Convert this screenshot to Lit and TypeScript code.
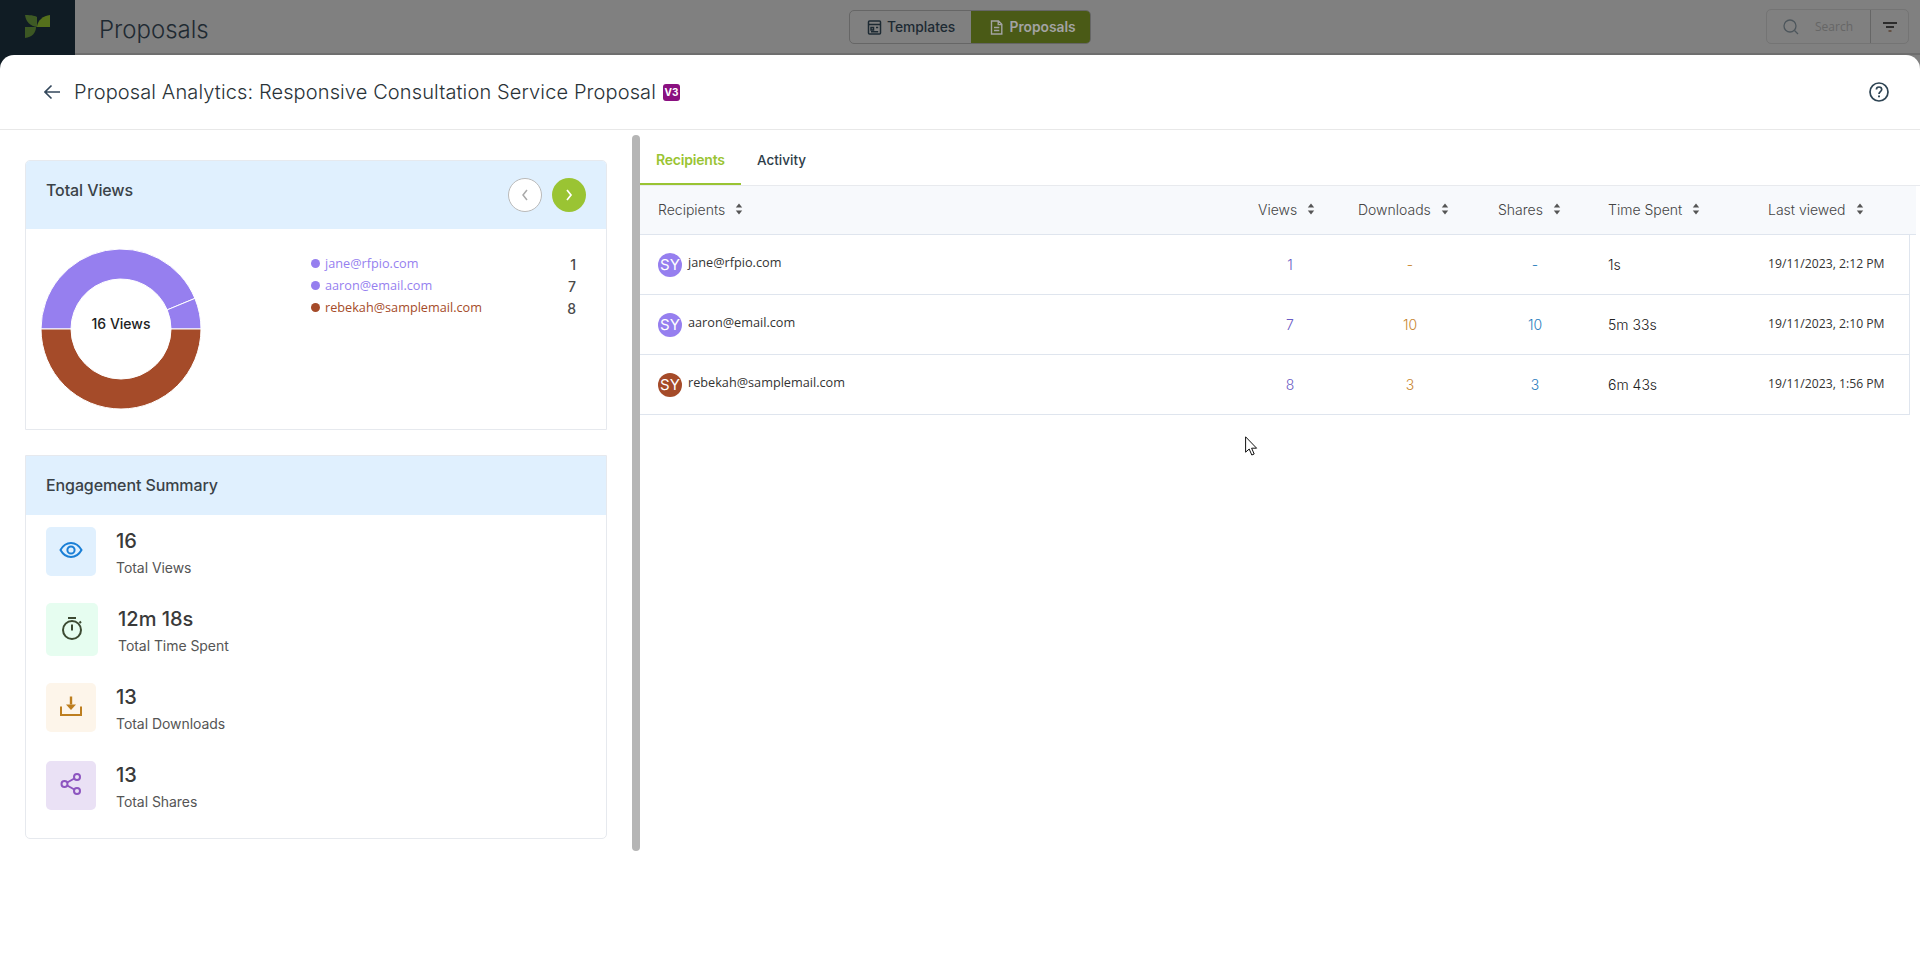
import { LitElement, html, css, svg } from 'lit';
import { customElement } from 'lit/decorators.js';

const PURPLE = '#967fef';
const BROWN = '#a54b29';

const recipients = [
  { mail: 'jane@rfpio.com', color: PURPLE, views: '1', downloads: '-', shares: '-', time: '1s', last: '19/11/2023, 2:12 PM' },
  { mail: 'aaron@email.com', color: PURPLE, views: '7', downloads: '10', shares: '10', time: '5m 33s', last: '19/11/2023, 2:10 PM' },
  { mail: 'rebekah@samplemail.com', color: BROWN, views: '8', downloads: '3', shares: '3', time: '6m 43s', last: '19/11/2023, 1:56 PM' },
];

// ring slice between two angles, degrees counted clockwise from 3 o'clock
function slice(from: number, to: number, color: string) {
  const pt = (r: number, a: number) => {
    const t = (a * Math.PI) / 180;
    return `${(80 + r * Math.cos(t)).toFixed(2)} ${(80 + r * Math.sin(t)).toFixed(2)}`;
  };
  const big = to - from > 180 ? 1 : 0;
  const d = `M${pt(80, from)} A80 80 0 ${big} 1 ${pt(80, to)} L${pt(50, to)} A50 50 0 ${big} 0 ${pt(50, from)} Z`;
  return svg`<path d=${d} fill=${color} stroke="#fff" stroke-width="1"></path>`;
}

const sortIcon = html`<svg class="sort" viewBox="0 0 8 12"><path d="M4 0.5 7.2 4.6H0.8Z M4 11.5 0.8 7.4H7.2Z" fill="#555"></path></svg>`;

@customElement('app-root')
export class AppRoot extends LitElement {
  static styles = css`
    * {
      box-sizing: border-box;
    }
    :host {
      display: block;
      position: relative;
      width: 1920px;
      height: 954px;
      overflow: hidden;
      background: #fff;
      font-family: Inter, 'Noto Sans', sans-serif;
      color: #333;
    }
    .topbar {
      display: flex;
      align-items: flex-start;
      height: 69px;
      background: #808080;
    }
    .brand {
      display: flex;
      justify-content: center;
      padding-top: 15px;
      width: 75px;
      height: 69px;
      background: #101c24;
    }
    .brand svg {
      width: 25px;
      height: 23px;
    }
    .page-title {
      width: 774px;
      height: 55px;
      padding: 13px 0 0 24px;
      font-size: 24px;
      line-height: 34px;
      font-weight: 300;
      color: #1f2a32;
      border-bottom: 2px solid #6e6e6e;
    }
    .fill {
      flex: 1;
      height: 55px;
      border-bottom: 2px solid #6e6e6e;
    }
    .center {
      width: 242px;
      height: 55px;
      padding-top: 10px;
      border-bottom: 2px solid #6e6e6e;
    }
    .toggle {
      display: flex;
      height: 34px;
      border: 1px solid #666;
      border-radius: 5px;
      overflow: hidden;
      font-size: 13.8px;
      font-weight: 500;
    }
    .toggle div {
      display: flex;
      align-items: center;
      gap: 5px;
      width: 121px;
      padding-left: 17px;
      color: #1d2a33;
    }
    .toggle svg {
      width: 15px;
      height: 15px;
      flex: none;
    }
    .toggle .on {
      width: 120px;
      padding-left: 18px;
      gap: 6px;
      background: #4a5a16;
      color: #a3a3a3;
      font-weight: 600;
    }
    .tools {
      width: 154px;
      height: 55px;
      padding: 9px 11px 0 0;
      border-bottom: 2px solid #6e6e6e;
    }
    .search {
      display: flex;
      height: 35px;
      border: 1px solid #747474;
      border-radius: 5px;
      font-family: 'Open Sans', sans-serif;
      font-size: 12px;
      color: #666;
    }
    .search .box {
      display: flex;
      align-items: center;
      gap: 16px;
      width: 104px;
      padding-left: 16px;
      border-right: 1px solid #666;
    }
    .search .filter {
      flex: 1;
      display: flex;
      align-items: center;
      justify-content: center;
    }
    .panel {
      position: relative;
      margin-top: -14px;
      background: #fff;
      border-radius: 14px 14px 0 0;
    }
    .panel-head {
      display: flex;
      align-items: center;
      height: 75px;
      padding: 0 31px 0 44px;
      border-bottom: 1px solid #e8e8e8;
    }
    .panel-head h1 {
      margin: 0 7px 0 14px;
      font-size: 20px;
      line-height: 28px;
      font-weight: 300;
      letter-spacing: 0.12px;
      color: #2a3338;
    }
    .badge {
      width: 17px;
      height: 17px;
      border-radius: 3px;
      background: #8a1080;
      color: #fff;
      font-size: 10px;
      font-weight: 700;
      line-height: 17px;
      text-align: center;
    }
    .help {
      margin-left: auto;
      width: 20px;
      height: 20px;
    }
    .body {
      display: flex;
      align-items: flex-start;
    }
    .left {
      width: 632px;
      padding: 30px 25px 0;
      display: flex;
      flex-direction: column;
      gap: 25px;
    }
    .scroll {
      width: 8px;
      height: 716px;
      margin-top: 5px;
      background: #b5b5b5;
      border-radius: 4px;
    }
    .card {
      border: 1px solid #e6e9ee;
      overflow: hidden;
    }
    .card-head {
      display: flex;
      align-items: center;
      padding: 0 20px;
      background: #e0f0fe;
      font-size: 16px;
      font-weight: 500;
      letter-spacing: -0.1px;
      color: #3a4248;
    }
    .views-card {
      height: 270px;
      border-radius: 5px 5px 0 0;
    }
    .views-card .card-head {
      height: 68px;
    }
    .views-card .card-head span {
      margin-bottom: 11px;
    }
    .nav {
      display: flex;
      gap: 10px;
      margin-left: auto;
    }
    .nav div {
      display: flex;
      align-items: center;
      justify-content: center;
      width: 34px;
      height: 34px;
      border-radius: 50%;
    }
    .nav .prev {
      background: #fff;
      border: 1px solid #b9b9b9;
    }
    .nav .next {
      background: #9ac433;
    }
    .nav svg {
      width: 10px;
      height: 12px;
    }
    .views-body {
      display: flex;
      align-items: flex-start;
      padding: 20px 0 0 15px;
    }
    .donut {
      position: relative;
      width: 160px;
      height: 160px;
    }
    .donut svg {
      display: block;
      width: 160px;
      height: 160px;
    }
    .donut span {
      position: absolute;
      left: 0;
      right: 0;
      top: 65px;
      line-height: 20px;
      text-align: center;
      font-size: 14px;
      font-weight: 500;
      color: #222;
    }
    .legend {
      width: 265px;
      margin: 3px 0 0 110px;
    }
    .legend-row {
      display: flex;
      align-items: center;
      height: 22px;
      font-family: 'Open Sans', sans-serif;
      font-size: 12.7px;
    }
    .legend-row i {
      width: 9px;
      height: 9px;
      margin-right: 5px;
      border-radius: 50%;
    }
    .legend-row b {
      margin: 3px 0 0 auto;
      font-family: Inter, sans-serif;
      font-size: 14px;
      font-weight: 500;
      color: #4a4a4a;
    }
    .eng {
      border-radius: 0 0 5px 5px;
    }
    .eng .card-head {
      height: 59px;
    }
    .eng .card-head span {
      margin-bottom: 2px;
    }
    .stats {
      display: flex;
      flex-direction: column;
      gap: 27px;
      height: 323px;
      padding: 12px 0 0 20px;
    }
    .stat {
      display: flex;
      align-items: flex-start;
      gap: 20px;
    }
    .stat:nth-child(3) {
      margin-bottom: 2px;
    }
    .tile {
      display: flex;
      align-items: center;
      justify-content: center;
      flex: none;
      width: 50px;
      height: 49px;
      border-radius: 5px;
    }
    .tile svg {
      width: 24px;
      height: 24px;
      margin-bottom: 4px;
    }
    .tile.big {
      width: 52px;
      height: 53px;
    }
    .stat-text {
      margin-bottom: -8px;
    }
    .tile.big + .stat-text {
      margin-top: 2px;
    }
    .num {
      font-size: 20px;
      line-height: 28px;
      font-weight: 500;
      color: #3a3a3a;
    }
    .lbl {
      font-size: 14px;
      line-height: 26px;
      font-weight: 400;
      letter-spacing: -0.05px;
      color: #555;
    }
    .right {
      flex: 1;
    }
    .tabs {
      display: flex;
      height: 56px;
      border-bottom: 1px solid #e8eaee;
      font-size: 13.5px;
      font-weight: 500;
      color: #2e3d49;
    }
    .tabs div {
      display: flex;
      align-items: center;
      padding: 5px 16px 0;
      height: 55px;
    }
    .tabs .on {
      width: 101px;
      padding-top: 5px;
      font-size: 14px;
      letter-spacing: -0.2px;
      color: #9ac433;
      font-weight: 600;
      border-bottom: 2px solid #9ac433;
    }
    .grid {
      display: grid;
      grid-template-columns: 600px 100px 140px 110px 160px 160px;
      align-items: center;
    }
    .thead {
      height: 49px;
      width: 1276px;
      padding-bottom: 2px;
      background: #f7f9fc;
      border-bottom: 1px solid #dfe5ee;
      font-size: 14px;
      font-weight: 300;
      color: #444;
    }
    .thead div {
      display: flex;
      align-items: center;
      gap: 10px;
      padding-left: 18px;
    }
    .sort {
      width: 8px;
      height: 12px;
    }
    .row {
      height: 60px;
      width: 1270px;
      border-bottom: 1px solid #dfe5ee;
      border-right: 1px solid #dfe5ee;
      font-size: 14px;
      font-weight: 300;
    }
    .who {
      display: flex;
      align-items: center;
      gap: 6px;
      padding-left: 18px;
      font-family: 'Open Sans', sans-serif;
      font-size: 12.7px;
      font-weight: 400;
      color: #333;
    }
    .who span {
      margin-bottom: 5px;
    }
    .avatar {
      display: flex;
      align-items: center;
      justify-content: center;
      width: 24px;
      height: 24px;
      border-radius: 50%;
      color: #fff;
      font-family: Inter, sans-serif;
      font-size: 15px;
      font-weight: 400;
    }
    .mid {
      text-align: center;
    }
    .c-views {
      color: #6a5bc4;
    }
    .c-down {
      color: #c8862f;
    }
    .c-share {
      color: #2a7dbd;
    }
    .time {
      padding-left: 18px;
      color: #222;
    }
    .last {
      padding-left: 18px;
      margin-bottom: 2px;
      font-family: 'Open Sans', sans-serif;
      font-size: 12.2px;
      font-weight: 400;
      color: #333;
    }
    .cursor {
      position: absolute;
      left: 1245px;
      top: 436px;
      width: 13px;
      height: 20px;
    }
  `;

  render() {
    return html`
      <div class="topbar">
        <div class="brand">
          <svg viewBox="0 0 25 23">
            <path d="M0 0C7 0 11 1 12 2V12C5 11 1 7 0 0Z" fill="#3e5a24"></path>
            <path d="M12 11.500C13 5 18 1 25 0V12H12Z" fill="#55701c"></path>
            <path d="M0 12H11C11 18 7 22 0 23Z" fill="#3c5723"></path>
          </svg>
        </div>
        <div class="page-title">Proposals</div>
        <div class="center">
          <div class="toggle">
            <div>
              <svg viewBox="0 0 15 15" fill="none" stroke="#1d2a33" stroke-width="1.5">
                <rect x="1.5" y="1" width="12" height="13" rx="1"></rect>
                <path d="M1.5 4.500H13.500M4 7.500H6.500V10H4ZM9 7.500H11.200M4 11.800H11.200"></path>
              </svg>
              Templates
            </div>
            <div class="on">
              <svg viewBox="0 0 15 15" fill="none" stroke="#a3a3a3" stroke-width="1.4">
                <path d="M2.500 1H9.500L12.800 4.300V14H2.500Z M9.200 1V4.600H12.800 M5 7.500H10.300M5 10.500H10.300"></path>
              </svg>
              Proposals
            </div>
          </div>
        </div>
        <div class="fill"></div>
        <div class="tools">
          <div class="search">
            <div class="box">
              <svg width="16" height="16" viewBox="0 0 16 16" fill="none" stroke="#4d565c" stroke-width="1.3">
                <circle cx="7" cy="7" r="6"></circle>
                <path d="M11.500 11.500 15 15"></path>
              </svg>
              Search
            </div>
            <div class="filter">
              <svg width="14" height="10" viewBox="0 0 14 10" fill="none" stroke="#111" stroke-width="1.5">
                <path d="M0 1H14M3 5H11"></path>
                <path d="M5.500 9H8.500" stroke="#5a4030"></path>
              </svg>
            </div>
          </div>
        </div>
      </div>
      <div class="panel">
        <div class="panel-head">
          <svg width="16" height="16" viewBox="0 0 16 16" fill="none" stroke="#33475b" stroke-width="1.6">
            <path d="M16 8H1M7.500 1.500 1 8l6.500 6.500"></path>
          </svg>
          <h1>Proposal Analytics: Responsive Consultation Service Proposal</h1>
          <div class="badge">V3</div>
          <svg class="help" viewBox="0 0 20 20" fill="none" stroke="#2e4453" stroke-width="1.7">
            <circle cx="10" cy="10" r="9"></circle>
            <path d="M7.400 7.600C7.400 6 8.600 5 10 5s2.700 1 2.700 2.500c0 2-2.700 2.200-2.700 4.400"></path>
            <path d="M10 13.600v1.700" stroke-width="1.900"></path>
          </svg>
        </div>
        <div class="body">
          <div class="left">
            <div class="card views-card">
              <div class="card-head">
                <span>Total Views</span>
                <div class="nav">
                  <div class="prev">
                    <svg viewBox="0 0 10 12" fill="none" stroke="#aaa" stroke-width="1.5"><path d="M7 1 3 6l4 5"></path></svg>
                  </div>
                  <div class="next">
                    <svg viewBox="0 0 10 12" fill="none" stroke="#fff" stroke-width="1.7"><path d="M3 1l4 5-4 5"></path></svg>
                  </div>
                </div>
              </div>
              <div class="views-body">
                <div class="donut">
                  <svg viewBox="0 0 160 160">
                    ${slice(180, 337.5, PURPLE)} ${slice(337.5, 360, PURPLE)} ${slice(0, 180, BROWN)}
                  </svg>
                  <span>16 Views</span>
                </div>
                <div class="legend">
                  ${recipients.map(
                    (r) => html`
                      <div class="legend-row">
                        <i style="background:${r.color}"></i>
                        <span style="color:${r.color}">${r.mail}</span>
                        <b>${r.views}</b>
                      </div>
                    `
                  )}
                </div>
              </div>
            </div>
            <div class="card eng">
              <div class="card-head"><span>Engagement Summary</span></div>
              <div class="stats">
                <div class="stat">
                  <div class="tile" style="background:#e0f0fe">
                    <svg viewBox="0 0 24 24" fill="none" stroke="#1a7fd6" stroke-width="2">
                      <path d="M1.500 12C4 7.500 7.500 5 12 5s8 2.500 10.500 7c-2.500 4.500-6 7-10.500 7S4 16.500 1.500 12Z"></path>
                      <circle cx="12" cy="12" r="3.600"></circle>
                    </svg>
                  </div>
                  <div class="stat-text"><div class="num">16</div><div class="lbl">Total Views</div></div>
                </div>
                <div class="stat">
                  <div class="tile big" style="background:#e6fdf0">
                    <svg viewBox="0 0 24 24" fill="none" stroke="#3c4a32" stroke-width="2">
                      <circle cx="12" cy="14" r="9"></circle>
                      <path d="M8 2h8M12 8.500v6M19.500 5.500l1.500 1.500"></path>
                    </svg>
                  </div>
                  <div class="stat-text"><div class="num">12m 18s</div><div class="lbl">Total Time Spent</div></div>
                </div>
                <div class="stat">
                  <div class="tile" style="background:#fdf5ea">
                    <svg viewBox="0 0 24 24" fill="none" stroke="#bd7e1f" stroke-width="2">
                      <path d="M2 12.500V21H22V12.500"></path>
                      <path d="M12 2.500v8" stroke-width="2.400"></path>
                      <path d="M7 10.500H17L12 16Z" fill="#bd7e1f" stroke="none"></path>
                    </svg>
                  </div>
                  <div class="stat-text"><div class="num">13</div><div class="lbl">Total Downloads</div></div>
                </div>
                <div class="stat">
                  <div class="tile" style="background:#eae1f5">
                    <svg viewBox="0 0 24 24" fill="none" stroke="#8d55c0" stroke-width="2">
                      <circle cx="18" cy="5" r="3"></circle>
                      <circle cx="5.500" cy="12" r="3"></circle>
                      <circle cx="18" cy="19" r="3"></circle>
                      <path d="M8.200 10.500 15.300 6.500M8.200 13.500 15.300 17.500"></path>
                    </svg>
                  </div>
                  <div class="stat-text"><div class="num">13</div><div class="lbl">Total Shares</div></div>
                </div>
              </div>
            </div>
          </div>
          <div class="scroll"></div>
          <div class="right">
            <div class="tabs">
              <div class="on">Recipients</div>
              <div>Activity</div>
            </div>
            <div class="grid thead">
              ${['Recipients', 'Views', 'Downloads', 'Shares', 'Time Spent', 'Last viewed'].map(
                (h) => html`<div>${h} ${sortIcon}</div>`
              )}
            </div>
            ${recipients.map(
              (r) => html`
                <div class="grid row">
                  <div class="who">
                    <div class="avatar" style="background:${r.color}">SY</div>
                    <span>${r.mail}</span>
                  </div>
                  <div class="mid c-views">${r.views}</div>
                  <div class="mid c-down">${r.downloads}</div>
                  <div class="mid c-share">${r.shares}</div>
                  <div class="time">${r.time}</div>
                  <div class="last">${r.last}</div>
                </div>
              `
            )}
          </div>
        </div>
      </div>
      <svg class="cursor" viewBox="0 0 13 20">
        <path d="M0.600 0.800V16.200L4.200 13 6.800 19 9.200 18 6.600 12.200H11.600Z" fill="#fff" stroke="#111" stroke-width="1"></path>
      </svg>
    `;
  }
}
